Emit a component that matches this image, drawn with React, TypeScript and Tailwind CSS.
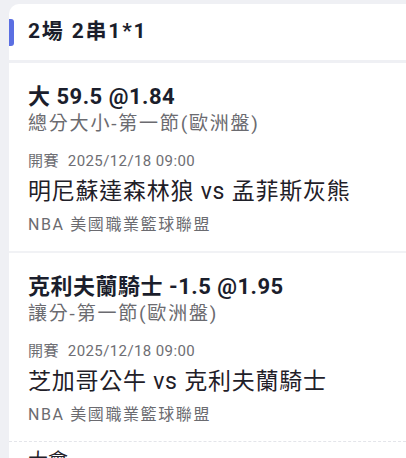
const font = "font-['Roboto','Noto_Sans_CJK_TC',sans-serif]";

type Bet = {
  pick: string;
  market: string;
  time: string;
  teams: string;
  league: string;
};

const bets: Bet[] = [
  {
    pick: "大 59.5 @1.84",
    market: "總分大小-第一節(歐洲盤)",
    time: "2025/12/18 09:00",
    teams: "明尼蘇達森林狼 vs 孟菲斯灰熊",
    league: "NBA 美國職業籃球聯盟",
  },
  {
    pick: "克利夫蘭騎士 -1.5 @1.95",
    market: "讓分-第一節(歐洲盤)",
    time: "2025/12/18 09:00",
    teams: "芝加哥公牛 vs 克利夫蘭騎士",
    league: "NBA 美國職業籃球聯盟",
  },
];

function BetRow({ bet, last }: { bet: Bet; last?: boolean }) {
  return (
    <div
      className={
        "pl-[19px] pt-[20px] pb-[14px] " +
        (last ? "border-b border-dashed border-[#e4e5ea]" : "border-b-2 border-[#f1f2f5]")
      }
    >
      <div className="text-[22px] leading-[28px] font-bold tracking-[0.5px] text-[#1b1e2c]">{bet.pick}</div>
      <div className="text-[19px] leading-[26px] text-[#6b6b70] tracking-[1.8px]">{bet.market}</div>
      <div className="mt-[12px] flex gap-[9px] text-[15px] leading-[24px] tracking-[0.4px] text-[#6e6e73]">
        <span>開賽</span>
        <span>{bet.time}</span>
      </div>
      <div className="mt-[4px] text-[23px] leading-[30px] tracking-[0.75px] text-[#1f2028]">{bet.teams}</div>
      <div className="mt-[6px] text-[16px] leading-[24px] text-[#6b6b70] tracking-[1.6px]">{bet.league}</div>
    </div>
  );
}

export default function App() {
  return (
    <div className={`${font} h-[458px] w-[406px] overflow-hidden bg-[#eff0f4] pl-[9px] pt-[4px]`}>
      <div className="flex h-[56px] items-center rounded-tl-[10px] bg-white">
        <div className="h-[27px] w-[5px] rounded-r-[3px] bg-[#5b6fe2]" />
        <div className="ml-[14px] text-[21px] font-bold tracking-[1.8px] text-[#1b1e2c]">2場 2串1*1</div>
      </div>
      <div className="mt-[3px] bg-white">
        {bets.map((b, i) => (
          <BetRow key={i} bet={b} last={i === bets.length - 1} />
        ))}
        <div className="pl-[19px] pt-[6px] text-[20px] leading-[26px] text-[#1f2028]">大會</div>
      </div>
    </div>
  );
}
